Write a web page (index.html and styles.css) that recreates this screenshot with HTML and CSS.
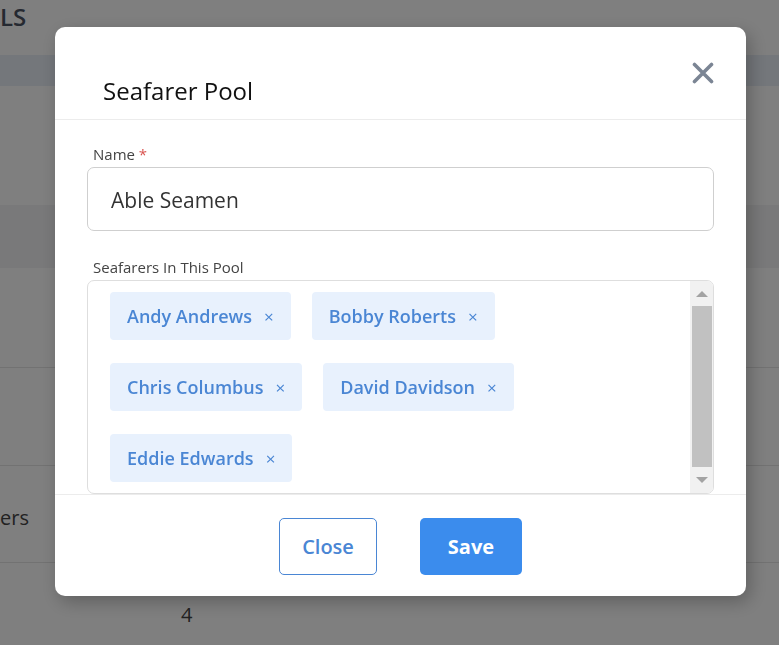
FILE: index.html
```html
<!DOCTYPE html>
<html lang="en">

<head>
    <meta charset="UTF-8">
    <meta name="viewport" content="width=device-width, initial-scale=1.0">
    <title>Seafarer Pools</title>

    <link rel="stylesheet" href="styles.css">
</head>

<body>
    <div class="page">
        <h1 class="page-title">LS</h1>
        <div class="table">
            <div class="table-head"></div>
            <div class="table-row row-tall"></div>
            <div class="table-row row-hover"></div>
            <div class="table-row row-a"></div>
            <div class="table-row row-b"></div>
            <div class="table-row row-c"><span class="cell-name">ers</span></div>
            <div class="table-row row-last"><span class="cell-count">4</span></div>
        </div>
    </div>

    <div class="overlay">
        <div class="modal">
            <div class="modal-header">
                <h2 class="modal-title">Seafarer Pool</h2>
                <button class="modal-close" aria-label="Close">
                    <svg width="22" height="22" viewBox="0 0 22 22">
                        <path d="M2.5 2.5 L19.5 19.5 M19.5 2.5 L2.5 19.5" stroke="#7b8594" stroke-width="3.6" stroke-linecap="round" />
                    </svg>
                </button>
            </div>

            <div class="modal-body">
                <label class="field-label">Name <span class="required">*</span></label>
                <input class="field-input" type="text" value="Able Seamen">

                <label class="field-label label-pool">Seafarers In This Pool</label>
                <div class="pool-box">
                    <div class="tag-list">
                        <span class="tag">Andy Andrews <span class="tag-remove">×</span></span>
                        <span class="tag">Bobby Roberts <span class="tag-remove">×</span></span>
                        <span class="tag">Chris Columbus <span class="tag-remove">×</span></span>
                        <span class="tag">David Davidson <span class="tag-remove">×</span></span>
                        <span class="tag">Eddie Edwards <span class="tag-remove">×</span></span>
                    </div>
                    <div class="scrollbar">
                        <span class="arrow-up"></span>
                        <span class="thumb"></span>
                        <span class="arrow-down"></span>
                    </div>
                </div>
            </div>

            <div class="modal-footer">
                <button class="btn btn-outline">Close</button>
                <button class="btn btn-primary">Save</button>
            </div>
        </div>
    </div>
</body>

</html>
```

FILE: styles.css
```css
body {
    margin: 0;
    font-family: 'Open Sans', 'Noto Sans', sans-serif;
    background-color: #fff;
    overflow: hidden;
}

/* page behind the dialog */
.page {
    height: 645px;
}

.page-title {
    margin: 0;
    padding-top: 1px;
    height: 55px;
    font-size: 24px;
    line-height: 32px;
    font-weight: 600;
    color: #4a5262;
    box-sizing: border-box;
}

.table-head {
    height: 31px;
    background-color: #e8eef6;
}

.table-row {
    display: flex;
    align-items: center;
    border-bottom: 1px solid #e4e4e4;
    box-sizing: border-box;
}

.row-tall {
    height: 119px;
    border-bottom: none;
}

.row-hover {
    height: 63px;
    background-color: #f3f3f4;
    border-bottom: none;
}

.row-a {
    height: 100px;
}

.row-b {
    height: 98px;
}

.row-c {
    height: 97px;
}

.row-last {
    height: 82px;
    border-bottom: none;
}

.cell-name {
    margin-top: 6px;
    font-size: 20px;
    color: #444;
}

.cell-count {
    margin-left: 181px;
    margin-top: 20px;
    font-size: 20px;
    color: #444;
}

/* dialog */
.overlay {
    position: fixed;
    inset: 0;
    background-color: rgba(0, 0, 0, 0.5);
}

.modal {
    width: 691px;
    margin: 27px 0 0 55px;
    background-color: #fff;
    border-radius: 10px;
    box-shadow: 4px 6px 18px rgba(0, 0, 0, 0.25);
    overflow: hidden;
}

.modal-header {
    display: flex;
    justify-content: space-between;
    height: 93px;
    padding: 0 32px 0 48px;
    border-bottom: 1px solid #ececec;
    box-sizing: border-box;
}

.modal-title {
    margin: 0;
    align-self: flex-end;
    margin-bottom: 12px;
    font-size: 24px;
    line-height: 32px;
    font-weight: 400;
    color: #111;
}

.modal-close {
    margin-top: 35px;
    padding: 0;
    width: 22px;
    height: 22px;
    border: none;
    background: none;
}

.modal-body {
    padding: 24px 32px 0 32px;
}

.field-label {
    display: block;
    margin: 0 0 3px 6px;
    font-size: 15px;
    line-height: 20px;
    color: #444;
}

.required {
    color: #d9534f;
}

.label-pool {
    margin-top: 26px;
}

.field-input {
    display: block;
    width: 100%;
    height: 64px;
    padding: 2px 23px 0;
    border: 1px solid #cfcfcf;
    border-radius: 7px;
    font-family: inherit;
    font-size: 21px;
    color: #333;
    box-sizing: border-box;
}

.pool-box {
    display: flex;
    height: 214px;
    border: 1px solid #dedede;
    border-radius: 7px;
    box-sizing: border-box;
    overflow: hidden;
}

.tag-list {
    flex: 1;
    display: flex;
    flex-wrap: wrap;
    align-content: flex-start;
    gap: 23px 21px;
    padding: 11px 22px;
}

.tag {
    display: flex;
    align-items: center;
    gap: 12px;
    height: 48px;
    padding: 0 17px;
    border-radius: 4px;
    background-color: #e8f1fd;
    color: #4a86d4;
    font-size: 18px;
    font-weight: 600;
}

.tag-remove {
    font-size: 17px;
    font-weight: 400;
}

.scrollbar {
    display: flex;
    flex-direction: column;
    align-items: center;
    width: 23px;
    padding: 10px 0 10px;
    background-color: #f1f1f1;
    box-sizing: border-box;
}

.arrow-up,
.arrow-down {
    width: 0;
    height: 0;
    border-left: 6px solid transparent;
    border-right: 6px solid transparent;
}

.arrow-up {
    border-bottom: 6px solid #a3a3a3;
}

.arrow-down {
    border-top: 6px solid #a3a3a3;
}

.thumb {
    width: 20px;
    height: 162px;
    margin: 9px 0 10px;
    background-color: #c1c1c1;
}

.modal-footer {
    display: flex;
    justify-content: center;
    gap: 43px;
    padding: 23px 0 21px;
    border-top: 1px solid #ececec;
}

.btn {
    height: 57px;
    border-radius: 5px;
    font-family: inherit;
    font-size: 20px;
    font-weight: 600;
    cursor: pointer;
}

.btn-outline {
    width: 98px;
    border: 1px solid #4a86d4;
    background-color: #fff;
    color: #4a86d4;
}

.btn-primary {
    width: 102px;
    border: none;
    background-color: #3b8ced;
    color: #fff;
    font-weight: 700;
}
```
